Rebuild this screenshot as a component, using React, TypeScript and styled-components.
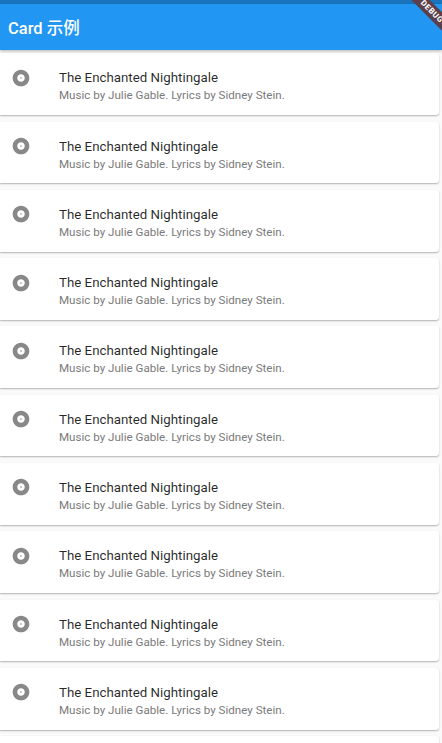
import React from 'react';
import styled, { createGlobalStyle } from 'styled-components';

const GlobalStyle = createGlobalStyle`
  html, body {
    margin: 0;
    padding: 0;
    background: #fafafa;
    font-family: Roboto, "Noto Sans", "Noto Sans CJK SC", sans-serif;
  }
`;

const Page = styled.div`
  position: relative;
  width: 442px;
  height: 743px;
  overflow: hidden;
  background: #fafafa;
`;

const StatusBar = styled.div`
  height: 4px;
  background: #1a74bd;
`;

const AppBar = styled.header`
  height: 46px;
  display: flex;
  align-items: center;
  padding-left: 8px;
  background: #2196f3;
  box-shadow: 0 1px 3px rgba(0, 0, 0, 0.3);
  position: relative;
  z-index: 1;
`;

const AppTitle = styled.h1`
  margin: 0;
  color: #fff;
  font-size: 16.5px;
  font-weight: 500;
  font-family: Roboto, "Noto Sans CJK SC", sans-serif;
`;

const List = styled.div`
  display: flex;
  flex-direction: column;
`;

const Card = styled.div`
  height: 61.7px;
  box-sizing: border-box;
  margin: 3.3px 3px 3.3px 0;
  background: #fff;
  border-radius: 0 3px 3px 0;
  box-shadow: 0 1px 2px rgba(0, 0, 0, 0.22), 0 1px 1px rgba(0, 0, 0, 0.08);
  display: flex;
  align-items: flex-start;
  padding: 15px 0 0 11px;
`;

const Leading = styled.div`
  width: 20px;
  height: 20px;
  margin-top: -0.5px;
  flex-shrink: 0;
  color: #888;
`;

const TextBlock = styled.div`
  margin-left: 28px;
  display: flex;
  flex-direction: column;
`;

const Title = styled.div`
  font-size: 13.3px;
  line-height: 19px;
  color: rgba(0, 0, 0, 0.85);
`;

const Subtitle = styled.div`
  font-size: 11.6px;
  line-height: 16px;
  color: #7a7a7a;
`;

const BannerClip = styled.div`
  position: absolute;
  top: 0;
  right: 0;
  width: 60px;
  height: 60px;
  overflow: hidden;
  pointer-events: none;
  z-index: 2;
`;

const Ribbon = styled.div`
  position: absolute;
  left: 9.5px;
  top: 4.5px;
  width: 80px;
  height: 13px;
  line-height: 13px;
  transform: rotate(45deg);
  background: #5c3f4b;
  color: #fff;
  text-align: center;
  font-size: 8px;
  font-weight: 700;
  letter-spacing: 0.5px;
  font-family: Roboto, sans-serif;
`;

const AlbumIcon = () => (
  <svg width="20" height="20" viewBox="0 0 24 24" fill="currentColor">
    <path d="M12 2C6.48 2 2 6.48 2 12s4.48 10 10 10 10-4.48 10-10S17.52 2 12 2zm0 14.5c-2.49 0-4.5-2.01-4.5-4.5S9.51 7.5 12 7.5s4.5 2.01 4.5 4.5-2.01 4.5-4.5 4.5zm0-5.5c-.55 0-1 .45-1 1s.45 1 1 1 1-.45 1-1-.45-1-1-1z" />
  </svg>
);

const items = Array.from({ length: 11 }, (_, i) => i);

const App: React.FC = () => (
  <Page>
    <GlobalStyle />
    <StatusBar />
    <AppBar>
      <AppTitle>Card 示例</AppTitle>
    </AppBar>
    <List>
      {items.map(i => (
        <Card key={i}>
          <Leading>
            <AlbumIcon />
          </Leading>
          <TextBlock>
            <Title>The Enchanted Nightingale</Title>
            <Subtitle>Music by Julie Gable. Lyrics by Sidney Stein.</Subtitle>
          </TextBlock>
        </Card>
      ))}
    </List>
    <BannerClip>
      <Ribbon>DEBUG</Ribbon>
    </BannerClip>
  </Page>
);

export default App;
